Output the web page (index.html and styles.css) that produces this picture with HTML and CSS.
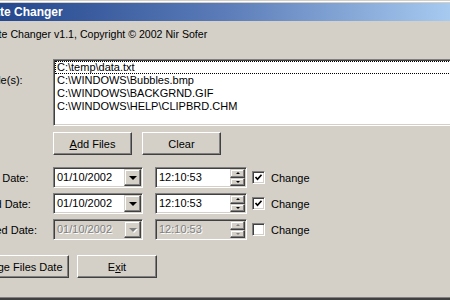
FILE: index.html
```html
<!DOCTYPE html>
<html lang="en">
<head>
    <meta charset="UTF-8">
    <title>FileDate Changer</title>
    <link rel="stylesheet" href="styles.css">
</head>
<body>
    <div class="window">
        <div class="frame">
            <div class="titlebar">FileDate Changer</div>

            <div class="client">
                <p class="about">FileDate Changer v1.1, Copyright &copy; 2002 Nir Sofer</p>

                <div class="files">
                    <span class="label files-label">File(s):</span>
                    <div class="listbox">
                        <div class="item focus">C:\temp\data.txt</div>
                        <div class="item">C:\WINDOWS\Bubbles.bmp</div>
                        <div class="item">C:\WINDOWS\BACKGRND.GIF</div>
                        <div class="item">C:\WINDOWS\HELP\CLIPBRD.CHM</div>
                    </div>
                </div>

                <div class="file-buttons">
                    <button class="btn"><u>A</u>dd Files</button>
                    <button class="btn">Clear</button>
                </div>

                <div class="dates">
                    <div class="date-row">
                        <span class="label">Created Date:</span>
                        <div class="combo">
                            <span class="value">01/10/2002</span>
                            <span class="drop"><span class="arrow"></span></span>
                        </div>
                        <div class="time">
                            <span class="value">12:10:53</span>
                            <span class="spin">
                                <span class="spin-btn"><span class="up"></span></span>
                                <span class="spin-btn"><span class="down"></span></span>
                            </span>
                        </div>
                        <span class="check checked">
                            <svg width="9" height="9" viewBox="0 0 9 9"><polyline points="1.5,4 3.5,6.2 7.5,1.8" fill="none" stroke="#000" stroke-width="1.7"/></svg>
                        </span>
                        <span class="check-label">Change</span>
                    </div>

                    <div class="date-row">
                        <span class="label">Modified Date:</span>
                        <div class="combo">
                            <span class="value">01/10/2002</span>
                            <span class="drop"><span class="arrow"></span></span>
                        </div>
                        <div class="time">
                            <span class="value">12:10:53</span>
                            <span class="spin">
                                <span class="spin-btn"><span class="up"></span></span>
                                <span class="spin-btn"><span class="down"></span></span>
                            </span>
                        </div>
                        <span class="check checked">
                            <svg width="9" height="9" viewBox="0 0 9 9"><polyline points="1.5,4 3.5,6.2 7.5,1.8" fill="none" stroke="#000" stroke-width="1.7"/></svg>
                        </span>
                        <span class="check-label">Change</span>
                    </div>

                    <div class="date-row disabled">
                        <span class="label">Accessed Date:</span>
                        <div class="combo">
                            <span class="value">01/10/2002</span>
                            <span class="drop"><span class="arrow"></span></span>
                        </div>
                        <div class="time">
                            <span class="value">12:10:53</span>
                            <span class="spin">
                                <span class="spin-btn"><span class="up"></span></span>
                                <span class="spin-btn"><span class="down"></span></span>
                            </span>
                        </div>
                        <span class="check"></span>
                        <span class="check-label">Change</span>
                    </div>
                </div>

                <div class="actions">
                    <button class="btn btn-wide">Change Files Date</button>
                    <button class="btn btn-exit">E<u>x</u>it</button>
                </div>
            </div>
        </div>
    </div>
</body>
</html>
```

FILE: styles.css
```css
* {
    margin: 0;
    padding: 0;
    box-sizing: border-box;
}
body {
    font-family: 'Liberation Sans', Arial, sans-serif;
    font-size: 11px;
    color: #000;
    background-color: #d4d0c8;
    overflow: hidden;
}
.window {
    width: 560px;
    height: 300px;
    margin-left: -46px;
    border-top: 1px solid #d4d0c8;
    border-bottom: 2px solid #404040;
}
.frame {
    border-top: 1px solid #fff;
    border-bottom: 1px solid #808080;
    padding-top: 1px;
}
.titlebar {
    height: 18px;
    line-height: 18px;
    padding-left: 10px;
    font-size: 12px;
    font-weight: bold;
    color: #fff;
    background: linear-gradient(to right, #0a246a 0, #24478e 46px, #5b7cb8 271px, #a6caf0 496px);
}
.client {
    height: 276px;
    padding: 7px 0 0 8px;
}
.about {
    line-height: 13px;
    margin-left: 6px;
    font-size: 10.6px;
}

/* file list */
.files {
    display: flex;
    margin-top: 18px;
}
.label {
    width: 91px;
    flex-shrink: 0;
    text-indent: -2px;
}
.files-label {
    padding-top: 15px;
    padding-left: 27px;
    line-height: 13px;
    text-indent: 0;
}
.listbox {
    width: 440px;
    height: 67px;
    padding: 1px;
    background-color: #fff;
    border: 1px solid;
    border-color: #808080 #fff #fff #808080;
    box-shadow: inset 1px 1px #404040, inset -1px -1px #d4d0c8;
}
.item {
    height: 13px;
    line-height: 13px;
    padding-left: 2px;
    white-space: nowrap;
}
.item.focus {
    outline: 1px dotted #000;
    outline-offset: -1px;
}

/* buttons */
.btn {
    height: 23px;
    width: 79px;
    font-family: inherit;
    font-size: 11px;
    color: #000;
    background-color: #d4d0c8;
    border: 1px solid;
    border-color: #fff #404040 #404040 #fff;
    box-shadow: inset -1px -1px #808080, inset 1px 1px #d4d0c8;
}
.file-buttons {
    display: flex;
    gap: 10px;
    margin: 6px 0 0 91px;
}
.actions {
    display: flex;
    gap: 8px;
    margin: 15px 0 0 3px;
}
.btn-wide {
    width: 104px;
}
.btn-exit {
    width: 80px;
}

/* date rows */
.dates {
    display: flex;
    flex-direction: column;
    gap: 5px;
    margin-top: 12px;
}
.date-row {
    display: flex;
    align-items: center;
    height: 21px;
}
.combo,
.time {
    display: flex;
    align-items: center;
    height: 21px;
    padding: 1px;
    background-color: #fff;
    border: 1px solid;
    border-color: #808080 #fff #fff #808080;
    box-shadow: inset 1px 1px #404040, inset -1px -1px #d4d0c8;
}
.combo {
    width: 90px;
}
.time {
    width: 92px;
    margin-left: 12px;
}
.value {
    flex: 1;
    padding-left: 2px;
    line-height: 13px;
}
.drop,
.spin-btn {
    display: flex;
    align-items: center;
    justify-content: center;
    background-color: #d4d0c8;
    border: 1px solid;
    border-color: #d4d0c8 #404040 #404040 #d4d0c8;
    box-shadow: inset -1px -1px #808080, inset 1px 1px #fff;
}
.drop {
    width: 17px;
    height: 17px;
}
.arrow {
    width: 0;
    height: 0;
    margin-top: 1px;
    border-left: 4px solid transparent;
    border-right: 4px solid transparent;
    border-top: 4px solid #000;
}
.spin {
    display: flex;
    flex-direction: column;
    width: 15px;
    height: 17px;
}
.spin-btn {
    flex: 1;
}
.up,
.down {
    width: 0;
    height: 0;
    border-left: 2px solid transparent;
    border-right: 2px solid transparent;
}
.up {
    border-bottom: 2px solid #000;
}
.down {
    border-top: 2px solid #000;
}
.check {
    display: flex;
    align-items: center;
    justify-content: center;
    width: 13px;
    height: 13px;
    margin-left: 5px;
    background-color: #fff;
    border: 1px solid;
    border-color: #808080 #fff #fff #808080;
    box-shadow: inset 1px 1px #404040, inset -1px -1px #d4d0c8;
}
.check-label {
    margin-left: 6px;
}

/* disabled row */
.disabled .combo,
.disabled .time {
    background-color: #d4d0c8;
}
.disabled .value {
    color: #808080;
    text-shadow: 1px 1px #fff;
}
.disabled .arrow {
    border-top-color: #808080;
    filter: drop-shadow(1px 1px 0 #fff);
}
.disabled .up {
    border-bottom-color: #808080;
}
.disabled .down {
    border-top-color: #808080;
}
```
